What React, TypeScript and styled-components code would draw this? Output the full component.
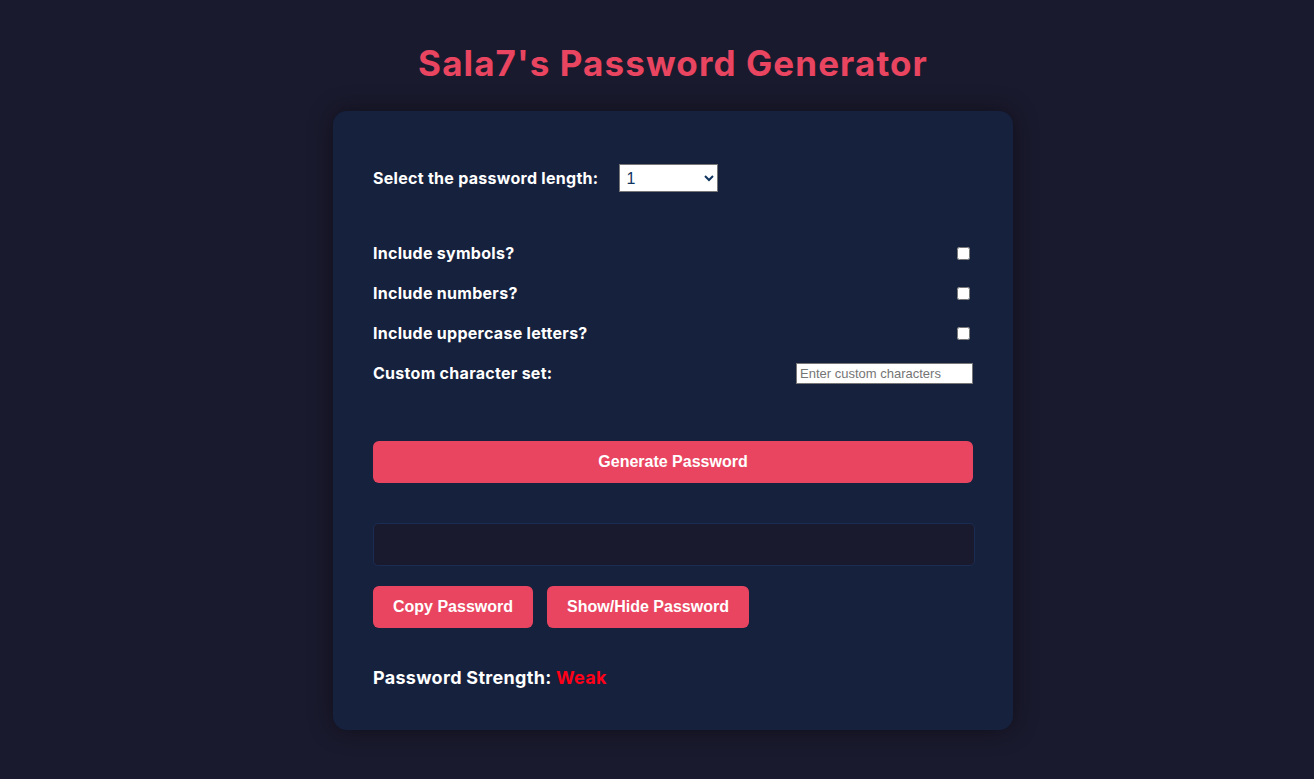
import React from "react";
import styled, { createGlobalStyle } from "styled-components";

const Global = createGlobalStyle`
  html, body { margin: 0; padding: 0; }
  body {
    background: #1a1a2e;
    font-family: "Inter", "Noto Sans", sans-serif;
    color: #ffffff;
    min-height: 779px;
  }
`;

const Page = styled.div`
  display: flex;
  flex-direction: column;
  align-items: center;
  padding-top: 40px;
  padding-left: 32px;
`;

const Title = styled.h1`
  margin: 0;
  height: 47px;
  line-height: 47px;
  font-size: 35px;
  font-weight: 700;
  color: #e94560;
  letter-spacing: 1.1px;
`;

const Card = styled.div`
  margin-top: 24px;
  width: 600px;
  padding: 40px;
  background: #16213e;
  border-radius: 14px;
  box-shadow: 0 0 24px rgba(0, 0, 0, 0.45);
  display: flex;
  flex-direction: column;
`;

const LengthRow = styled.div`
  margin-top: 13px;
  display: flex;
  align-items: center;
  height: 28px;
  gap: 21px;
`;

const Label = styled.label`
  font-size: 16px;
  font-weight: 700;
  color: #ffffff;
  letter-spacing: 0.28px;
`;

const Select = styled.select`
  width: 99px;
  height: 28px;
  font-family: "Liberation Sans", Arial, sans-serif;
  font-size: 16px;
  color: #0f3460;
  background: #ffffff;
  border: 1px solid #767676;
  border-radius: 0;
  padding: 0 2px;
`;

const Options = styled.div`
  margin-top: 41px;
  display: flex;
  flex-direction: column;
`;

const OptionRow = styled.div`
  height: 40px;
  display: flex;
  align-items: center;
  justify-content: space-between;
`;

const Check = styled.input`
  width: 13px;
  height: 13px;
  margin: 0 3px 0 0;
`;

const CustomInput = styled.input`
  width: 177px;
  height: 21px;
  box-sizing: border-box;
  font-family: "Liberation Sans", Arial, sans-serif;
  font-size: 13px;
  padding: 1px 3px;
  border: 1px solid #767676;
  background: #ffffff;
  &::placeholder { color: #757575; }
`;

const Button = styled.button<{ $full?: boolean; $w?: number }>`
  height: 42px;
  width: ${(p) => (p.$full ? "100%" : `${p.$w}px`)};
  border: none;
  border-radius: 6px;
  background: #e94560;
  color: #ffffff;
  font-family: "Liberation Sans", Arial, sans-serif;
  font-weight: 700;
  font-size: 16px;
  cursor: pointer;
`;

const GenerateWrap = styled.div`
  margin-top: 48px;
  display: flex;
`;

const Output = styled.input`
  margin-top: 40px;
  width: 602px;
  height: 43px;
  box-sizing: border-box;
  background: #1a1a2e;
  border: 1px solid #1b2c52;
  border-radius: 5px;
  color: #ffffff;
  font-size: 16px;
  padding: 0 12px;
  outline: none;
`;

const ButtonRow = styled.div`
  margin-top: 20px;
  display: flex;
  gap: 14px;
`;

const Strength = styled.div`
  margin-top: 37px;
  height: 25px;
  line-height: 25px;
  font-size: 18px;
  font-weight: 700;
  color: #ffffff;
  letter-spacing: 0.3px;
`;

const Weak = styled.span`
  color: #ff0018;
`;

export default function App() {
  return (
    <>
      <Global />
      <Page>
        <Title>Sala7's Password Generator</Title>
        <Card>
          <LengthRow>
            <Label htmlFor="len">Select the password length:</Label>
            <Select id="len" defaultValue="1">
              {Array.from({ length: 32 }, (_, i) => (
                <option key={i} value={String(i + 1)}>
                  {i + 1}
                </option>
              ))}
            </Select>
          </LengthRow>
          <Options>
            <OptionRow>
              <Label>Include symbols?</Label>
              <Check type="checkbox" />
            </OptionRow>
            <OptionRow>
              <Label>Include numbers?</Label>
              <Check type="checkbox" />
            </OptionRow>
            <OptionRow>
              <Label>Include uppercase letters?</Label>
              <Check type="checkbox" />
            </OptionRow>
            <OptionRow>
              <Label>Custom character set:</Label>
              <CustomInput type="text" placeholder="Enter custom characters" />
            </OptionRow>
          </Options>
          <GenerateWrap>
            <Button $full>Generate Password</Button>
          </GenerateWrap>
          <Output type="text" readOnly />
          <ButtonRow>
            <Button $w={160}>Copy Password</Button>
            <Button $w={202}>Show/Hide Password</Button>
          </ButtonRow>
          <Strength>
            Password Strength: <Weak>Weak</Weak>
          </Strength>
        </Card>
      </Page>
    </>
  );
}
